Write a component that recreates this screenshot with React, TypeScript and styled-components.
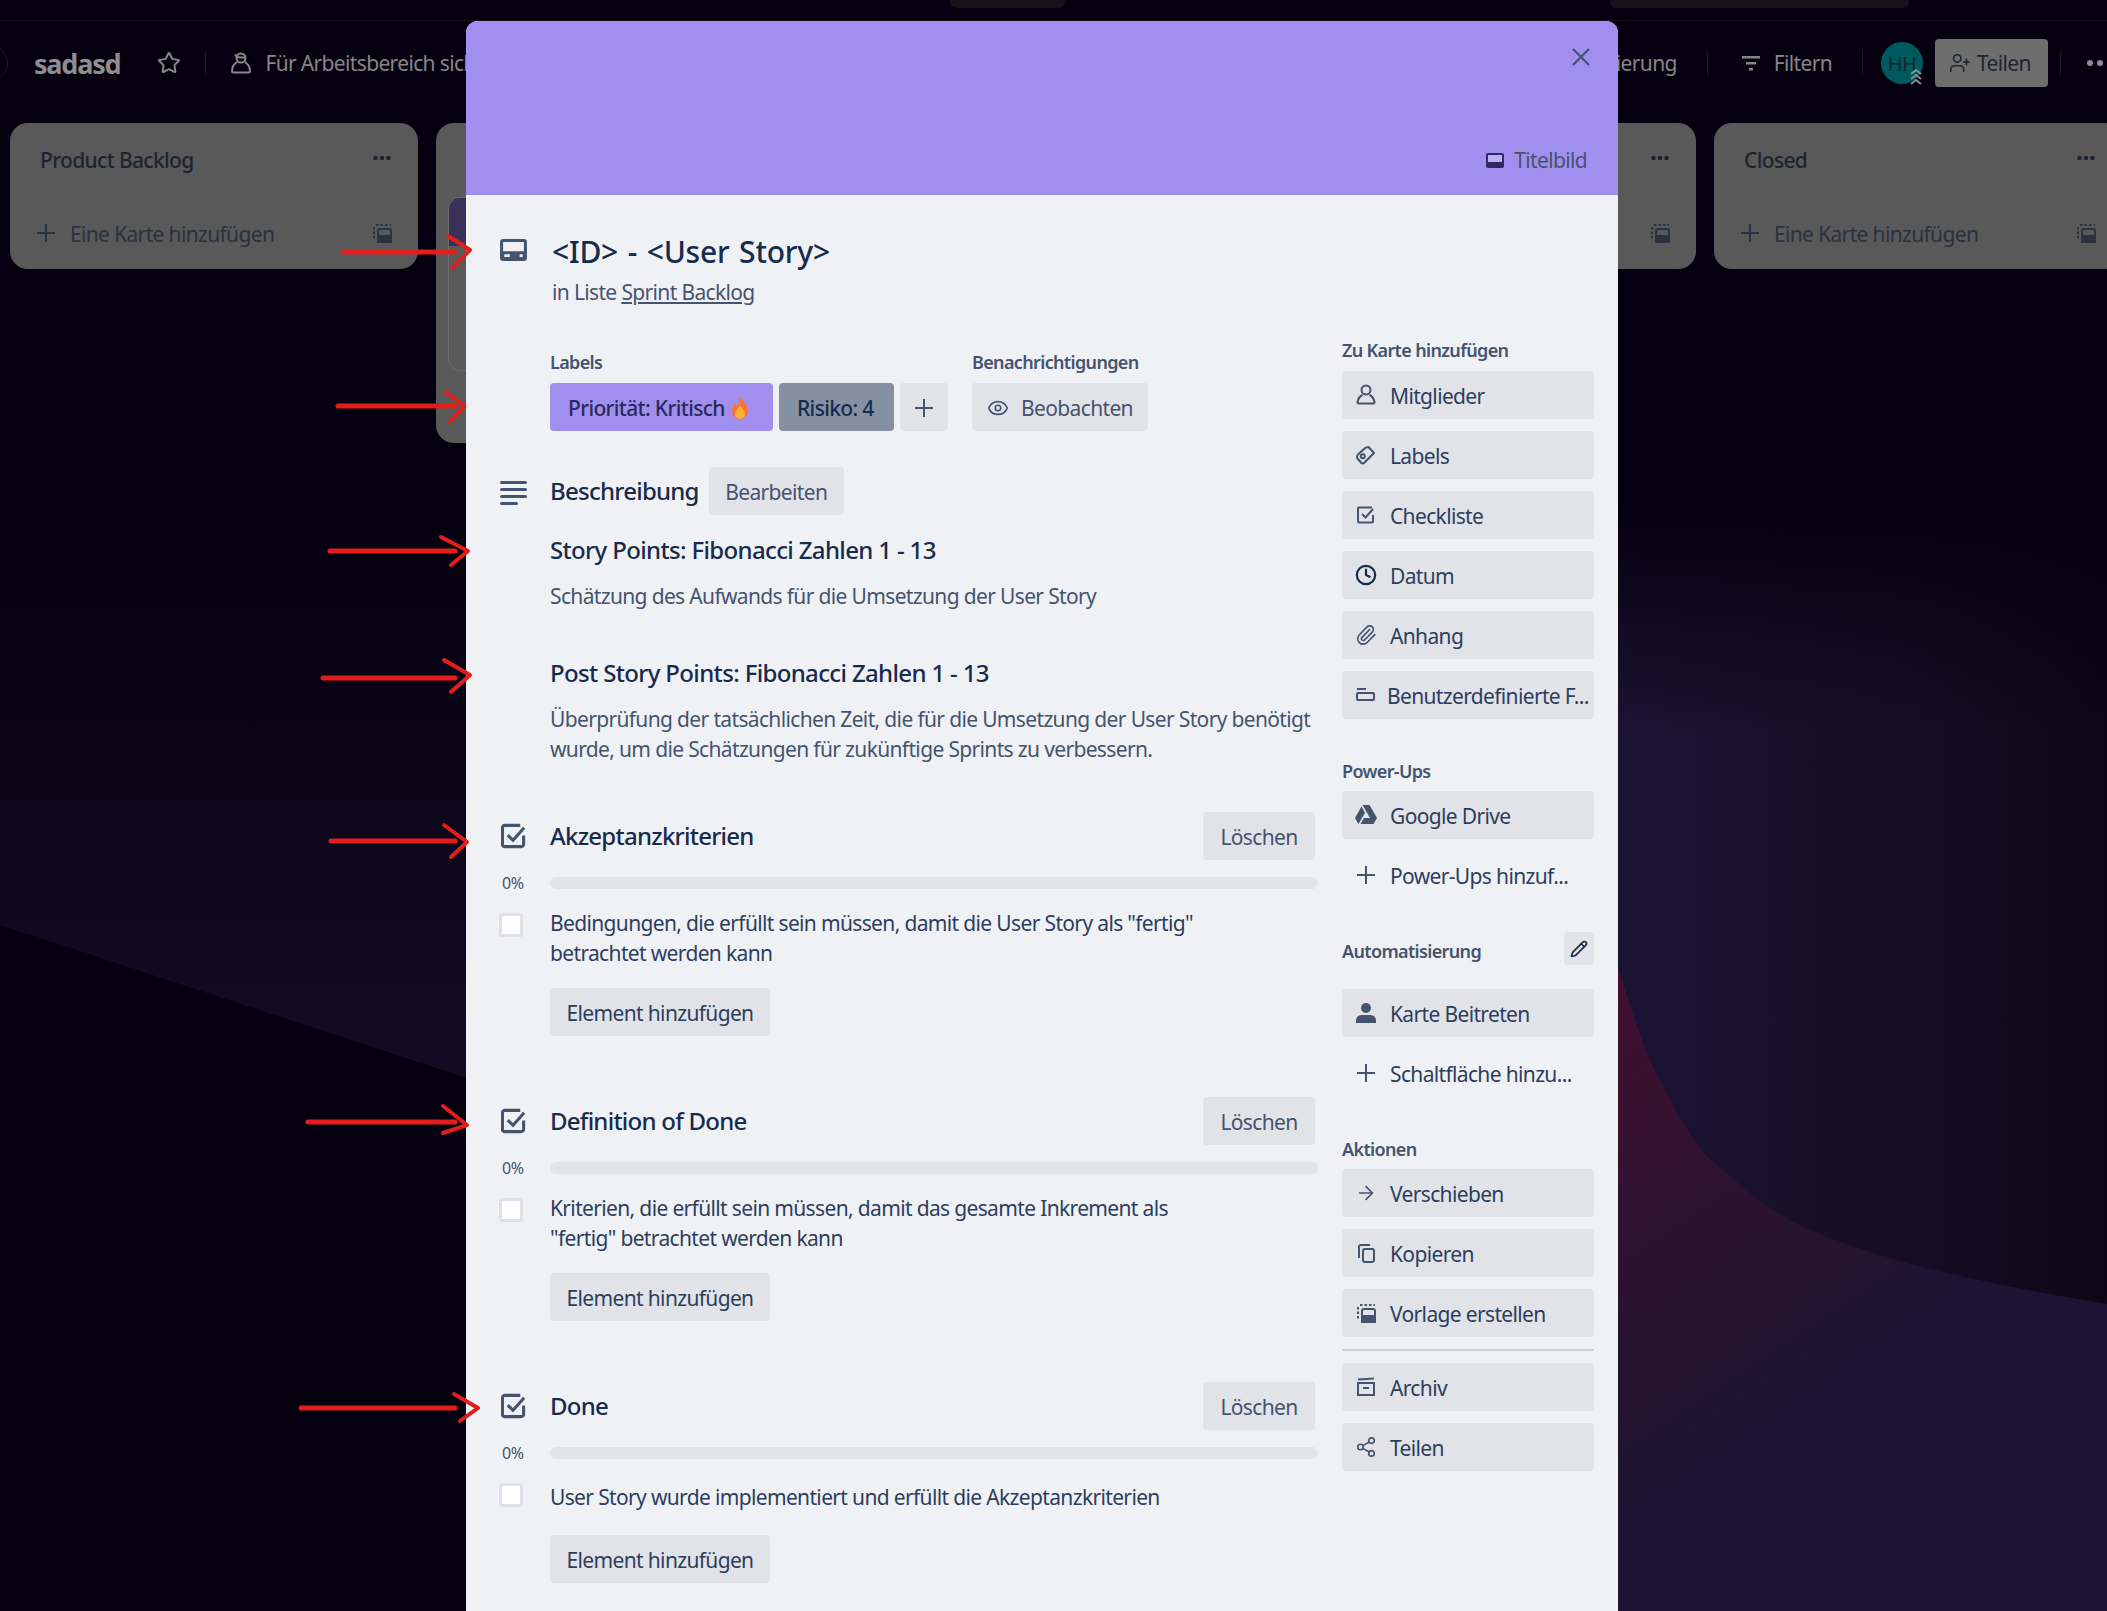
import React from "react";
import styled, { createGlobalStyle } from "styled-components";
import { ArrowRight, Clock, Eye, Paperclip, Pencil, Share2, Star, UserPlus } from "lucide-react";

const GlobalStyle = createGlobalStyle`
    html, body {
        margin: 0;
        padding: 0;
        background: #05000f;
    }
    * {
        box-sizing: border-box;
    }
    body {
        font-family: "Noto Sans", "Open Sans", Arial, sans-serif;
        font-size: 21px;
        letter-spacing: -0.65px;
    }
`;

const Page = styled.div`
    position: relative;
    width: 2107px;
    height: 1611px;
    overflow: hidden;
    background: #05000f;
`;

const Backdrop = styled.svg`
    position: absolute;
    left: 0;
    top: 0;
`;

const Annotations = styled.svg`
    position: absolute;
    left: 0;
    top: 0;
    pointer-events: none;
`;

const Board = styled.div`
    position: relative;
    display: flex;
    flex-direction: column;
    width: 2107px;
`;

const TopBar = styled.div`
    display: flex;
    height: 21px;
    padding-left: 950px;
    gap: 545px;
    border-bottom: 1px solid #17141f;
`;

const TopBarStub = styled.div<{ $width: number }>`
    width: ${(p) => p.$width}px;
    height: 8px;
    background: #16131b;
    border-radius: 0 0 6px 6px;
`;

const BoardHeader = styled.header`
    display: flex;
    justify-content: space-between;
    align-items: center;
    height: 84px;
`;

const HeaderGroup = styled.div`
    display: flex;
    align-items: center;
`;

const BackCircle = styled.div`
    width: 36px;
    height: 36px;
    margin-left: -28px;
    margin-right: 26px;
    border: 1px solid #1f1c26;
    border-radius: 50%;
`;

const BoardName = styled.h1`
    margin: 0 37px 0 0;
    font-size: 27px;
    font-weight: 700;
    letter-spacing: -1.2px;
    color: #8e8e8e;
`;

const HeaderDivider = styled.span<{ $left?: number; $right?: number }>`
    width: 1px;
    height: 24px;
    margin-left: ${(p) => p.$left ?? 0}px;
    margin-right: ${(p) => p.$right ?? 0}px;
    background: #1c1a22;
`;

const HeaderText = styled.span`
    display: flex;
    align-items: center;
    gap: 13px;
    color: #868686;
    white-space: nowrap;
`;

const Avatar = styled.div`
    position: relative;
    display: flex;
    align-items: center;
    justify-content: center;
    width: 42px;
    height: 42px;
    margin: 0 12px 0 18px;
    background: #00595f;
    border-radius: 50%;
    font-size: 20px;
    color: #12262e;
`;

const AvatarBadge = styled.svg`
    position: absolute;
    right: 0;
    bottom: -1px;
`;

const ShareButton = styled.button`
    display: flex;
    align-items: center;
    gap: 6px;
    width: 113px;
    height: 48px;
    padding: 0 14px;
    margin-right: 12px;
    background: #6e6e6e;
    border: none;
    border-radius: 4px;
    font: inherit;
    letter-spacing: inherit;
    color: #1f2633;
`;

const HeaderDots = styled.svg`
    flex: none;
    margin-left: 25px;
    margin-right: -7px;
    fill: #8e8e8e;
`;

const Lists = styled.div`
    display: flex;
    align-items: flex-start;
    gap: 18px;
    padding: 18px 0 0 10px;
`;

const List = styled.section`
    flex: 0 0 408px;
    padding-bottom: 12px;
    background: #595959;
    border-radius: 18px;
`;

const ListHeader = styled.div`
    display: flex;
    justify-content: space-between;
    align-items: flex-start;
    height: 74px;
    padding: 23px 27px 0 30px;
    font-weight: 500;
    color: #1d2431;
`;

const ListMenu = styled.svg`
    margin-top: 9px;
    fill: #1d2431;
`;

const ListCard = styled.div`
    height: 174px;
    margin: 0 12px;
    overflow: hidden;
    background: #595959;
    border: 1px solid #6d6d6d;
    border-radius: 12px;
`;

const ListCardCover = styled.div`
    height: 48px;
    background: #3a3158;
`;

const AddCardRow = styled.div`
    display: flex;
    align-items: center;
    height: 48px;
    margin: 12px 12px 0;
    padding: 0 14px 0 14px;
    gap: 14px;
    color: #2a3240;
    white-space: nowrap;
`;

const AddCardLabel = styled.span`
    flex: 1;
    padding-top: 2px;
`;

const Modal = styled.main`
    position: absolute;
    left: 466px;
    top: 21px;
    width: 1152px;
    height: 1640px;
    overflow: hidden;
    background: #f0f1f5;
    border-radius: 12px 12px 0 0;
    color: #172b4d;
`;

const Cover = styled.div`
    position: relative;
    height: 174px;
    background: #a08fef;
`;

const CloseButton = styled.svg`
    position: absolute;
    right: 28px;
    top: 27px;
    stroke: #44546f;
`;

const CoverButton = styled.span`
    position: absolute;
    right: 31px;
    bottom: 21px;
    display: flex;
    align-items: center;
    gap: 10px;
    color: #44546f;
`;

const Body = styled.div`
    display: grid;
    grid-template-columns: 852px 252px;
    column-gap: 24px;
`;

const Main = styled.div`
    display: flex;
    flex-direction: column;
`;

const Row = styled.div<{ $center?: boolean }>`
    display: flex;
    align-items: ${(p) => (p.$center ? "center" : "flex-start")};
`;

const Gutter = styled.div`
    display: flex;
    justify-content: flex-start;
    flex: 0 0 84px;
    padding-left: 34px;
    color: #44546f;
`;

const ChecklistGutter = styled(Gutter)`
    padding-left: 35px;
`;

const TitleBlock = styled.div`
    padding-top: 39px;
`;

const TitleIconSlot = styled(Gutter)`
    padding-top: 5px;
`;

const CardTitle = styled.h2`
    margin: 0 0 7px 2px;
    font-size: 30px;
    line-height: 36px;
    font-weight: 500;
    letter-spacing: -0.2px;
    word-spacing: 2px;
    color: #172b4d;
`;

const Subtitle = styled.div`
    margin-left: 2px;
    line-height: 30px;
    color: #44546f;
`;

const SubtitleLink = styled.span`
    text-decoration: underline;
`;

const Meta = styled.div`
    display: flex;
    gap: 24px;
    margin-top: 43px;
    padding-left: 84px;
`;

const SmallHeading = styled.h3`
    margin: 0 0 9px;
    font-size: 18px;
    line-height: 24px;
    font-weight: 600;
    letter-spacing: -0.65px;
    color: #44546f;
`;

const Chips = styled.div`
    display: flex;
    gap: 6px;
`;

const Chip = styled.span<{ $bg: string; $color: string; $width: number }>`
    display: flex;
    align-items: center;
    gap: 6px;
    width: ${(p) => p.$width}px;
    height: 48px;
    padding: 2px 0 0 18px;
    background: ${(p) => p.$bg};
    border-radius: 4px;
    font-weight: 500;
    color: ${(p) => p.$color};
    white-space: nowrap;
`;

const GreyButton = styled.button<{ $width?: number }>`
    display: flex;
    align-items: center;
    justify-content: center;
    flex: none;
    gap: 12px;
    height: 48px;
    padding: 2px 0 0;
    width: ${(p) => p.$width ?? 135}px;
    background: #e2e3e8;
    border: none;
    border-radius: 4px;
    font: inherit;
    letter-spacing: inherit;
    color: #44546f;
    white-space: nowrap;
`;

const AddItemButton = styled(GreyButton)`
    color: #2c3e5d;
`;

const SectionTitle = styled.h3`
    margin: 0;
    font-size: 24px;
    line-height: 32px;
    font-weight: 500;
    letter-spacing: -0.75px;
    color: #172b4d;
`;

const DescriptionHeader = styled(Row)`
    margin-top: 36px;
`;

const DescriptionGap = styled.span`
    width: 10px;
`;

const Description = styled.div`
    padding-left: 84px;
`;

const DescHeading = styled.h4<{ $top: number }>`
    margin: ${(p) => p.$top}px 0 0;
    font-size: 24px;
    line-height: 30px;
    font-weight: 500;
    letter-spacing: -0.65px;
    color: #172b4d;
`;

const DescText = styled.p`
    margin: 16px 0 0;
    line-height: 30px;
    color: #44546f;
    white-space: nowrap;
`;

const ChecklistBlock = styled.section<{ $top: number }>`
    margin-top: ${(p) => p.$top}px;
`;

const ChecklistHead = styled(Row)`
    height: 48px;
    padding-right: 3px;
`;

const ChecklistName = styled(SectionTitle)`
    flex: 1;
`;

const Progress = styled(Row)`
    height: 12px;
    margin-top: 17px;
`;

const Percent = styled.span`
    flex: 0 0 84px;
    padding-left: 36px;
    font-size: 16px;
    line-height: 12px;
    letter-spacing: -0.3px;
    color: #44546f;
`;

const Bar = styled.div`
    flex: 1;
    height: 12px;
    background: #e2e3e8;
    border-radius: 6px;
`;

const Item = styled(Row)`
    margin-top: 19px;
`;

const CheckSlot = styled.div`
    flex: 0 0 84px;
    padding: 5px 0 0 33px;
`;

const CheckBox = styled.span`
    display: block;
    width: 24px;
    height: 24px;
    background: #fff;
    border: 3px solid #e0e1e6;
    border-radius: 3px;
`;

const ItemText = styled.div`
    display: flex;
    align-items: center;
    width: 720px;
    min-height: 37px;
    line-height: 30px;
    color: #2c3e5d;
`;

const AddItemRow = styled.div`
    margin-top: 20px;
    padding-left: 84px;
`;

const Sidebar = styled.aside`
    display: flex;
    flex-direction: column;
    padding-top: 143px;
`;

const SideGroup = styled.div<{ $top?: number }>`
    display: flex;
    flex-direction: column;
    gap: 12px;
    margin-top: ${(p) => p.$top ?? 0}px;
`;

const SideHeading = styled(SmallHeading)<{ $top: number }>`
    margin: ${(p) => p.$top}px 0 -3px;
`;

const AutomationHead = styled.div`
    display: flex;
    justify-content: space-between;
    align-items: flex-end;
    margin-top: 33px;
    margin-bottom: 24px;
`;

const AutomationTitle = styled(SideHeading)`
    margin: 0 0 2px;
`;

const PencilButton = styled.span`
    display: flex;
    align-items: center;
    justify-content: center;
    width: 30px;
    height: 33px;
    background: #e2e3e8;
    border-radius: 4px;
    color: #172b4d;
`;

const SideButton = styled.button<{ $plain?: boolean }>`
    display: flex;
    align-items: center;
    height: 48px;
    padding: 0 0 0 12px;
    gap: 12px;
    background: ${(p) => (p.$plain ? "transparent" : "#e2e3e8")};
    border: none;
    border-radius: 4px;
    font: inherit;
    letter-spacing: inherit;
    color: #2c3e5d;
    white-space: nowrap;
`;

const SideLabel = styled.span<{ $tight?: boolean }>`
    padding-top: 2px;
    margin-left: ${(p) => (p.$tight ? -3 : 0)}px;
`;

const SideIcon = styled.span`
    display: flex;
    justify-content: center;
    flex: 0 0 24px;
    color: #44546f;
`;

const SideDivider = styled.hr`
    width: 100%;
    height: 2px;
    margin: 0;
    background: #cbd2dc;
    border: none;
`;

const CardIcon = () => (
    <svg width="27" height="22" viewBox="1 3 22 18" fill="currentColor">
        <path
            fillRule="evenodd"
            d="M3.500 3h17A2.500 2.500 0 0 1 23 5.500v13a2.500 2.500 0 0 1-2.500 2.500h-17A2.500 2.500 0 0 1 1 18.500v-13A2.500 2.500 0 0 1 3.500 3zM3.500 5.500V13h17V5.500zM4.500 15.500v2.200h4.500v-2.200zM17 15.500v2.200h2.500v-2.200z"
        />
    </svg>
);

const LinesIcon = () => (
    <svg width="27" height="27" viewBox="0 0 27 27" fill="currentColor">
        <rect x="0" y="3" width="27" height="3" rx="1.500" />
        <rect x="0" y="10" width="27" height="3" rx="1.500" />
        <rect x="0" y="17" width="27" height="3" rx="1.500" />
        <rect x="0" y="24" width="18" height="3" rx="1.500" />
    </svg>
);

const ChecklistIcon = () => (
    <svg width="26" height="26" viewBox="0 0 27 27" fill="none" stroke="currentColor" strokeWidth="3.200">
        <path d="M23.500 13v9a2.500 2.500 0 0 1-2.500 2.500H4A2.500 2.500 0 0 1 1.500 22V5A2.500 2.500 0 0 1 4 2.500h16" />
        <path d="M7 12.500l5.500 5.500L24 5" />
    </svg>
);

const TagIcon = () => (
    <svg width="20" height="20" viewBox="0 0 20 20" fill="none" stroke="currentColor" strokeWidth="2" strokeLinejoin="round">
        <path d="M12.500 2L18 8 8.500 17.500a2.500 2.500 0 0 1-3.500 0L2 14a3 3 0 0 1 0-4.500L7.500 4.500a7 7 0 0 1 5-2.500z" />
        <circle cx="6.800" cy="11.200" r="2" />
    </svg>
);

const FieldIcon = () => (
    <svg width="20" height="16" viewBox="0 0 20 16" fill="none" stroke="currentColor" strokeWidth="2">
        <path d="M1 2h9" />
        <rect x="1" y="6" width="17" height="7" rx="1" />
    </svg>
);

const DriveIcon = () => (
    <svg width="22" height="20" viewBox="0 0 22 20" fill="currentColor">
        <path d="M7.500 0h7l7.500 13h-7z" />
        <path d="M6.500 1.500L10 7.700 3.500 19 0 13z" />
        <path d="M5.500 19l3.500-6h13l-3.500 6z" />
    </svg>
);

const TemplateIcon = () => (
    <svg width="19" height="19" viewBox="0 0 19 19" fill="none" stroke="currentColor" strokeWidth="2">
        <path d="M3 1h15M1 3v12" strokeDasharray="2.500 2" />
        <rect x="5" y="5" width="13" height="13" rx="2" />
        <path d="M5 12h13v6H5z" fill="currentColor" />
    </svg>
);

const CopyIcon = () => (
    <svg width="17" height="19" viewBox="0 0 17 19" fill="none" stroke="currentColor" strokeWidth="2">
        <path d="M1 14V3a2 2 0 0 1 2-2h9" />
        <rect x="5" y="5" width="11" height="13" rx="2" />
    </svg>
);

const PlusIcon = () => (
    <svg width="20" height="20" viewBox="0 0 20 20" fill="none" stroke="currentColor" strokeWidth="2">
        <path d="M10 1v18M1 10h18" />
    </svg>
);

const ArchiveIcon = () => (
    <svg width="20" height="20" viewBox="0 0 20 20" fill="none" stroke="currentColor" strokeWidth="2">
        <path d="M2 2.500L18 1.500" />
        <rect x="2" y="6" width="16" height="12" />
        <path d="M7 11h6" />
    </svg>
);

const FilledUserIcon = () => (
    <svg width="22" height="22" viewBox="0 0 22 22" fill="currentColor">
        <circle cx="11" cy="6" r="5" />
        <path d="M1 21v-3a6 6 0 0 1 6-5h8a6 6 0 0 1 6 5v3z" />
    </svg>
);

const MemberIcon = () => (
    <svg width="20" height="22" viewBox="0 0 20 22" fill="none" stroke="currentColor" strokeWidth="2">
        <circle cx="10" cy="6" r="4.500" />
        <path d="M6.500 11c-3 1.500-4.500 4-5 7a1.500 1.500 0 0 0 1.500 1.500h14a1.500 1.500 0 0 0 1.500-1.500c-.500-3-2-5.500-5-7" />
    </svg>
);

const SmallCheckIcon = () => (
    <svg width="18" height="18" viewBox="0 0 18 18" fill="none" stroke="currentColor" strokeWidth="2">
        <path d="M16 9v6.500a1 1 0 0 1-1 1H2a1 1 0 0 1-1-1v-13a1 1 0 0 1 1-1h13" />
        <path d="M5 8l3.500 3.500L16 3" />
    </svg>
);

const FlameIcon = () => (
    <svg width="18" height="24" viewBox="0 0 18 24">
        <path d="M9 0c1 4 8 8 8 15a8 8 0 0 1-16 0c0-4 2-6 3-8 1 2 2 3 3 3 1-3 1-6 2-10z" fill="#f8742a" />
        <path d="M9 9c1 3 5 5 5 9a5 5 0 0 1-10 0c0-3 3-5 5-9z" fill="#fbb03b" />
    </svg>
);

const BoardWorkspaceIcon = () => (
    <svg width="22" height="24" viewBox="0 0 22 24" fill="none" stroke="currentColor" strokeWidth="2">
        <circle cx="11" cy="7" r="4.500" />
        <path d="M7 11c-3 2-5 5-5 9a1.500 1.500 0 0 0 1.500 1.500h15A1.500 1.500 0 0 0 20 20c0-4-2-7-5-9" />
        <path d="M5 3.500c1 2 4 3.500 10 3" />
    </svg>
);

const FilterIcon = () => (
    <svg width="20" height="20" viewBox="0 0 20 20" fill="currentColor">
        <rect x="1" y="3" width="18" height="2.500" />
        <rect x="5" y="9" width="10" height="2.500" />
        <rect x="8" y="15" width="4" height="2.500" />
    </svg>
);

const iconProps = { size: 22, strokeWidth: 1.8 };

type SideAction = { label: string; icon: React.ReactNode; plain?: boolean; tight?: boolean };

const addActions: SideAction[] = [
    { label: "Mitglieder", icon: <MemberIcon /> },
    { label: "Labels", icon: <TagIcon /> },
    { label: "Checkliste", icon: <SmallCheckIcon /> },
    { label: "Datum", icon: <Clock size={22} strokeWidth={2.4} color="#172b4d" /> },
    { label: "Anhang", icon: <Paperclip {...iconProps} /> },
    { label: "Benutzerdefinierte F...", icon: <FieldIcon />, tight: true },
];

const moveActions: SideAction[] = [
    { label: "Verschieben", icon: <ArrowRight {...iconProps} /> },
    { label: "Kopieren", icon: <CopyIcon /> },
    { label: "Vorlage erstellen", icon: <TemplateIcon /> },
];

const endActions: SideAction[] = [
    { label: "Archiv", icon: <ArchiveIcon /> },
    { label: "Teilen", icon: <Share2 {...iconProps} /> },
];

const checklists = [
    {
        title: "Akzeptanzkriterien",
        item: (
            <span>
                Bedingungen, die erfüllt sein müssen, damit die User Story als "fertig"
                <br />
                betrachtet werden kann
            </span>
        ),
        top: 48,
    },
    {
        title: "Definition of Done",
        item: (
            <span>
                Kriterien, die erfüllt sein müssen, damit das gesamte Inkrement als
                <br />
                "fertig" betrachtet werden kann
            </span>
        ),
        top: 61,
    },
    {
        title: "Done",
        item: <span>User Story wurde implementiert und erfüllt die Akzeptanzkriterien</span>,
        top: 61,
    },
];

const arrows = [
    { y: 252, from: 343, head: "M448 236L470 250L452 268" },
    { y: 406, from: 338, head: "M446 392L464 406L450 422" },
    { y: 551, from: 330, head: "M441 537L468 551L451 565" },
    { y: 678, from: 323, head: "M444 660L470 675L451 692" },
    { y: 841, from: 331, head: "M444 825L467 842L451 857" },
    { y: 1122, from: 308, head: "M443 1106L467 1125L443 1133" },
    { y: 1408, from: 301, head: "M454 1394L478 1408L460 1421" },
];

const swooshPath =
    "M1618 968C1632 1010 1645 1055 1660 1081C1675 1108 1690 1140 1710 1159C1740 1185 1770 1212 1810 1230C1850 1247 1900 1262 1943 1272C2000 1285 2050 1295 2107 1304V1611H1618Z";

function SideActions({ items }: { items: SideAction[] }) {
    return (
        <>
            {items.map((action) => (
                <SideButton key={action.label} $plain={action.plain}>
                    <SideIcon>{action.icon}</SideIcon>
                    <SideLabel $tight={action.tight}>{action.label}</SideLabel>
                </SideButton>
            ))}
        </>
    );
}

function BoardList({ title, card }: { title?: string; card?: boolean }) {
    return (
        <List>
            <ListHeader>
                <span>{title}</span>
                <ListMenu width="18" height="6" viewBox="0 0 18 6">
                    <circle cx="2.500" cy="3" r="2.300" />
                    <circle cx="9" cy="3" r="2.300" />
                    <circle cx="15.500" cy="3" r="2.300" />
                </ListMenu>
            </ListHeader>
            {card && (
                <ListCard>
                    <ListCardCover />
                </ListCard>
            )}
            <AddCardRow>
                <PlusIcon />
                <AddCardLabel>{title ? "Eine Karte hinzufügen" : ""}</AddCardLabel>
                <TemplateIcon />
            </AddCardRow>
        </List>
    );
}

export default function App(): JSX.Element {
    return (
        <>
            <GlobalStyle />
            <Page>
                <Backdrop width="2107" height="1611" viewBox="0 0 2107 1611">
                    <defs>
                        <linearGradient id="wedge" x1="0" y1="500" x2="0" y2="1078" gradientUnits="userSpaceOnUse">
                            <stop offset="0" stopColor="#05000f" />
                            <stop offset="1" stopColor="#130c24" />
                        </linearGradient>
                        <linearGradient id="dusk" x1="1618" y1="0" x2="2107" y2="0" gradientUnits="userSpaceOnUse">
                            <stop offset="0" stopColor="#1b1333" />
                            <stop offset="0.6" stopColor="#160e26" />
                            <stop offset="1" stopColor="#0c0716" />
                        </linearGradient>
                        <linearGradient id="fade" x1="0" y1="500" x2="0" y2="730" gradientUnits="userSpaceOnUse">
                            <stop offset="0" stopColor="#05000f" />
                            <stop offset="1" stopColor="#05000f" stopOpacity="0" />
                        </linearGradient>
                        <linearGradient id="glow" x1="1618" y1="1000" x2="1860" y2="1360" gradientUnits="userSpaceOnUse">
                            <stop offset="0" stopColor="#40102f" />
                            <stop offset="1" stopColor="#40102f" stopOpacity="0" />
                        </linearGradient>
                    </defs>
                    <path d="M0 500H470V1079L0 925Z" fill="url(#wedge)" />
                    <rect x="1618" y="500" width="489" height="900" fill="url(#dusk)" />
                    <rect x="1618" y="500" width="489" height="230" fill="url(#fade)" />
                    <path d={swooshPath} fill="#1c1432" />
                    <path d={swooshPath} fill="url(#glow)" />
                </Backdrop>

                <Board>
                    <TopBar>
                        <TopBarStub $width={115} />
                        <TopBarStub $width={299} />
                    </TopBar>
                    <BoardHeader>
                        <HeaderGroup>
                            <BackCircle />
                            <BoardName>sadasd</BoardName>
                            <HeaderText>
                                <Star size={24} strokeWidth={2} />
                            </HeaderText>
                            <HeaderDivider $left={24} $right={24} />
                            <HeaderText>
                                <BoardWorkspaceIcon />
                                Für Arbeitsbereich sichtbar
                            </HeaderText>
                        </HeaderGroup>
                        <HeaderGroup>
                            <HeaderText>Automatisierung</HeaderText>
                            <HeaderDivider $left={30} $right={33} />
                            <HeaderText>
                                <FilterIcon />
                                Filtern
                            </HeaderText>
                            <HeaderDivider $left={30} />
                            <Avatar>
                                HH
                                <AvatarBadge width="14" height="18" viewBox="0 0 14 18" fill="none" stroke="#8d8d8d" strokeWidth="2">
                                    <path d="M2 7l5-4 5 4M2 12l5-4 5 4M2 17l5-4 5 4" />
                                </AvatarBadge>
                            </Avatar>
                            <ShareButton>
                                <UserPlus size={22} strokeWidth={1.8} />
                                Teilen
                            </ShareButton>
                            <HeaderDivider />
                            <HeaderDots width="28" height="8" viewBox="0 0 28 8">
                                <circle cx="4" cy="4" r="3" />
                                <circle cx="14" cy="4" r="3" />
                                <circle cx="24" cy="4" r="3" />
                            </HeaderDots>
                        </HeaderGroup>
                    </BoardHeader>
                    <Lists>
                        <BoardList title="Product Backlog" />
                        <BoardList card />
                        <BoardList />
                        <BoardList />
                        <BoardList title="Closed" />
                    </Lists>
                </Board>

                <Modal>
                    <Cover>
                        <CloseButton width="18" height="18" viewBox="0 0 18 18" fill="none" strokeWidth="2.200">
                            <path d="M1 1l16 16M17 1L1 17" />
                        </CloseButton>
                        <CoverButton>
                            <svg width="18" height="15" viewBox="0 0 18 15">
                                <rect width="18" height="15" rx="2" fill="#2e2a63" />
                                <rect x="2" y="2" width="14" height="7" fill="#bdb1f5" />
                            </svg>
                            Titelbild
                        </CoverButton>
                    </Cover>
                    <Body>
                        <Main>
                            <TitleBlock>
                                <Row>
                                    <TitleIconSlot>
                                        <CardIcon />
                                    </TitleIconSlot>
                                    <div>
                                        <CardTitle>{"<ID> - <User Story>"}</CardTitle>
                                        <Subtitle>
                                            in Liste <SubtitleLink>Sprint Backlog</SubtitleLink>
                                        </Subtitle>
                                    </div>
                                </Row>
                            </TitleBlock>

                            <Meta>
                                <div>
                                    <SmallHeading>Labels</SmallHeading>
                                    <Chips>
                                        <Chip $bg="#a08fef" $color="#2a2a5c" $width={223}>
                                            Priorität: Kritisch
                                            <FlameIcon />
                                        </Chip>
                                        <Chip $bg="#8590a2" $color="#172b4d" $width={115}>
                                            Risiko: 4
                                        </Chip>
                                        <GreyButton $width={48}>
                                            <PlusIcon />
                                        </GreyButton>
                                    </Chips>
                                </div>
                                <div>
                                    <SmallHeading>Benachrichtigungen</SmallHeading>
                                    <GreyButton $width={176}>
                                        <Eye size={22} strokeWidth={1.8} />
                                        Beobachten
                                    </GreyButton>
                                </div>
                            </Meta>

                            <DescriptionHeader $center>
                                <Gutter>
                                    <LinesIcon />
                                </Gutter>
                                <SectionTitle>Beschreibung</SectionTitle>
                                <DescriptionGap />
                                <GreyButton>Bearbeiten</GreyButton>
                            </DescriptionHeader>

                            <Description>
                                <DescHeading $top={20}>Story Points: Fibonacci Zahlen 1 - 13</DescHeading>
                                <DescText>Schätzung des Aufwands für die Umsetzung der User Story</DescText>
                                <DescHeading $top={47}>Post Story Points: Fibonacci Zahlen 1 - 13</DescHeading>
                                <DescText>
                                    Überprüfung der tatsächlichen Zeit, die für die Umsetzung der User Story benötigt
                                    <br />
                                    wurde, um die Schätzungen für zukünftige Sprints zu verbessern.
                                </DescText>
                            </Description>

                            {checklists.map((list) => (
                                <ChecklistBlock key={list.title} $top={list.top}>
                                    <ChecklistHead $center>
                                        <ChecklistGutter>
                                            <ChecklistIcon />
                                        </ChecklistGutter>
                                        <ChecklistName>{list.title}</ChecklistName>
                                        <GreyButton $width={112}>Löschen</GreyButton>
                                    </ChecklistHead>
                                    <Progress $center>
                                        <Percent>0%</Percent>
                                        <Bar />
                                    </Progress>
                                    <Item>
                                        <CheckSlot>
                                            <CheckBox />
                                        </CheckSlot>
                                        <ItemText>{list.item}</ItemText>
                                    </Item>
                                    <AddItemRow>
                                        <AddItemButton $width={220}>Element hinzufügen</AddItemButton>
                                    </AddItemRow>
                                </ChecklistBlock>
                            ))}
                        </Main>

                        <Sidebar>
                            <SideHeading $top={0}>Zu Karte hinzufügen</SideHeading>
                            <SideGroup $top={12}>
                                <SideActions items={addActions} />
                            </SideGroup>
                            <SideHeading $top={40}>Power-Ups</SideHeading>
                            <SideGroup $top={11}>
                                <SideActions
                                    items={[
                                        { label: "Google Drive", icon: <DriveIcon /> },
                                        { label: "Power-Ups hinzuf...", icon: <PlusIcon />, plain: true },
                                    ]}
                                />
                            </SideGroup>
                            <AutomationHead>
                                <AutomationTitle $top={0}>Automatisierung</AutomationTitle>
                                <PencilButton>
                                    <Pencil size={18} strokeWidth={2.2} />
                                </PencilButton>
                            </AutomationHead>
                            <SideGroup>
                                <SideActions
                                    items={[
                                        { label: "Karte Beitreten", icon: <FilledUserIcon /> },
                                        { label: "Schaltfläche hinzu...", icon: <PlusIcon />, plain: true },
                                    ]}
                                />
                            </SideGroup>
                            <SideHeading $top={40}>Aktionen</SideHeading>
                            <SideGroup $top={11}>
                                <SideActions items={moveActions} />
                                <SideDivider />
                                <SideActions items={endActions} />
                            </SideGroup>
                        </Sidebar>
                    </Body>
                </Modal>

                <Annotations width="2107" height="1611" viewBox="0 0 2107 1611" fill="none" stroke="#e31c1c" strokeWidth="5" strokeLinecap="round" strokeLinejoin="round">
                    {arrows.map((arrow) => (
                        <g key={arrow.y}>
                            <path d={`M${arrow.from} ${arrow.y}H455`} />
                            <path d={arrow.head} strokeWidth="4" />
                        </g>
                    ))}
                </Annotations>
            </Page>
        </>
    );
}
